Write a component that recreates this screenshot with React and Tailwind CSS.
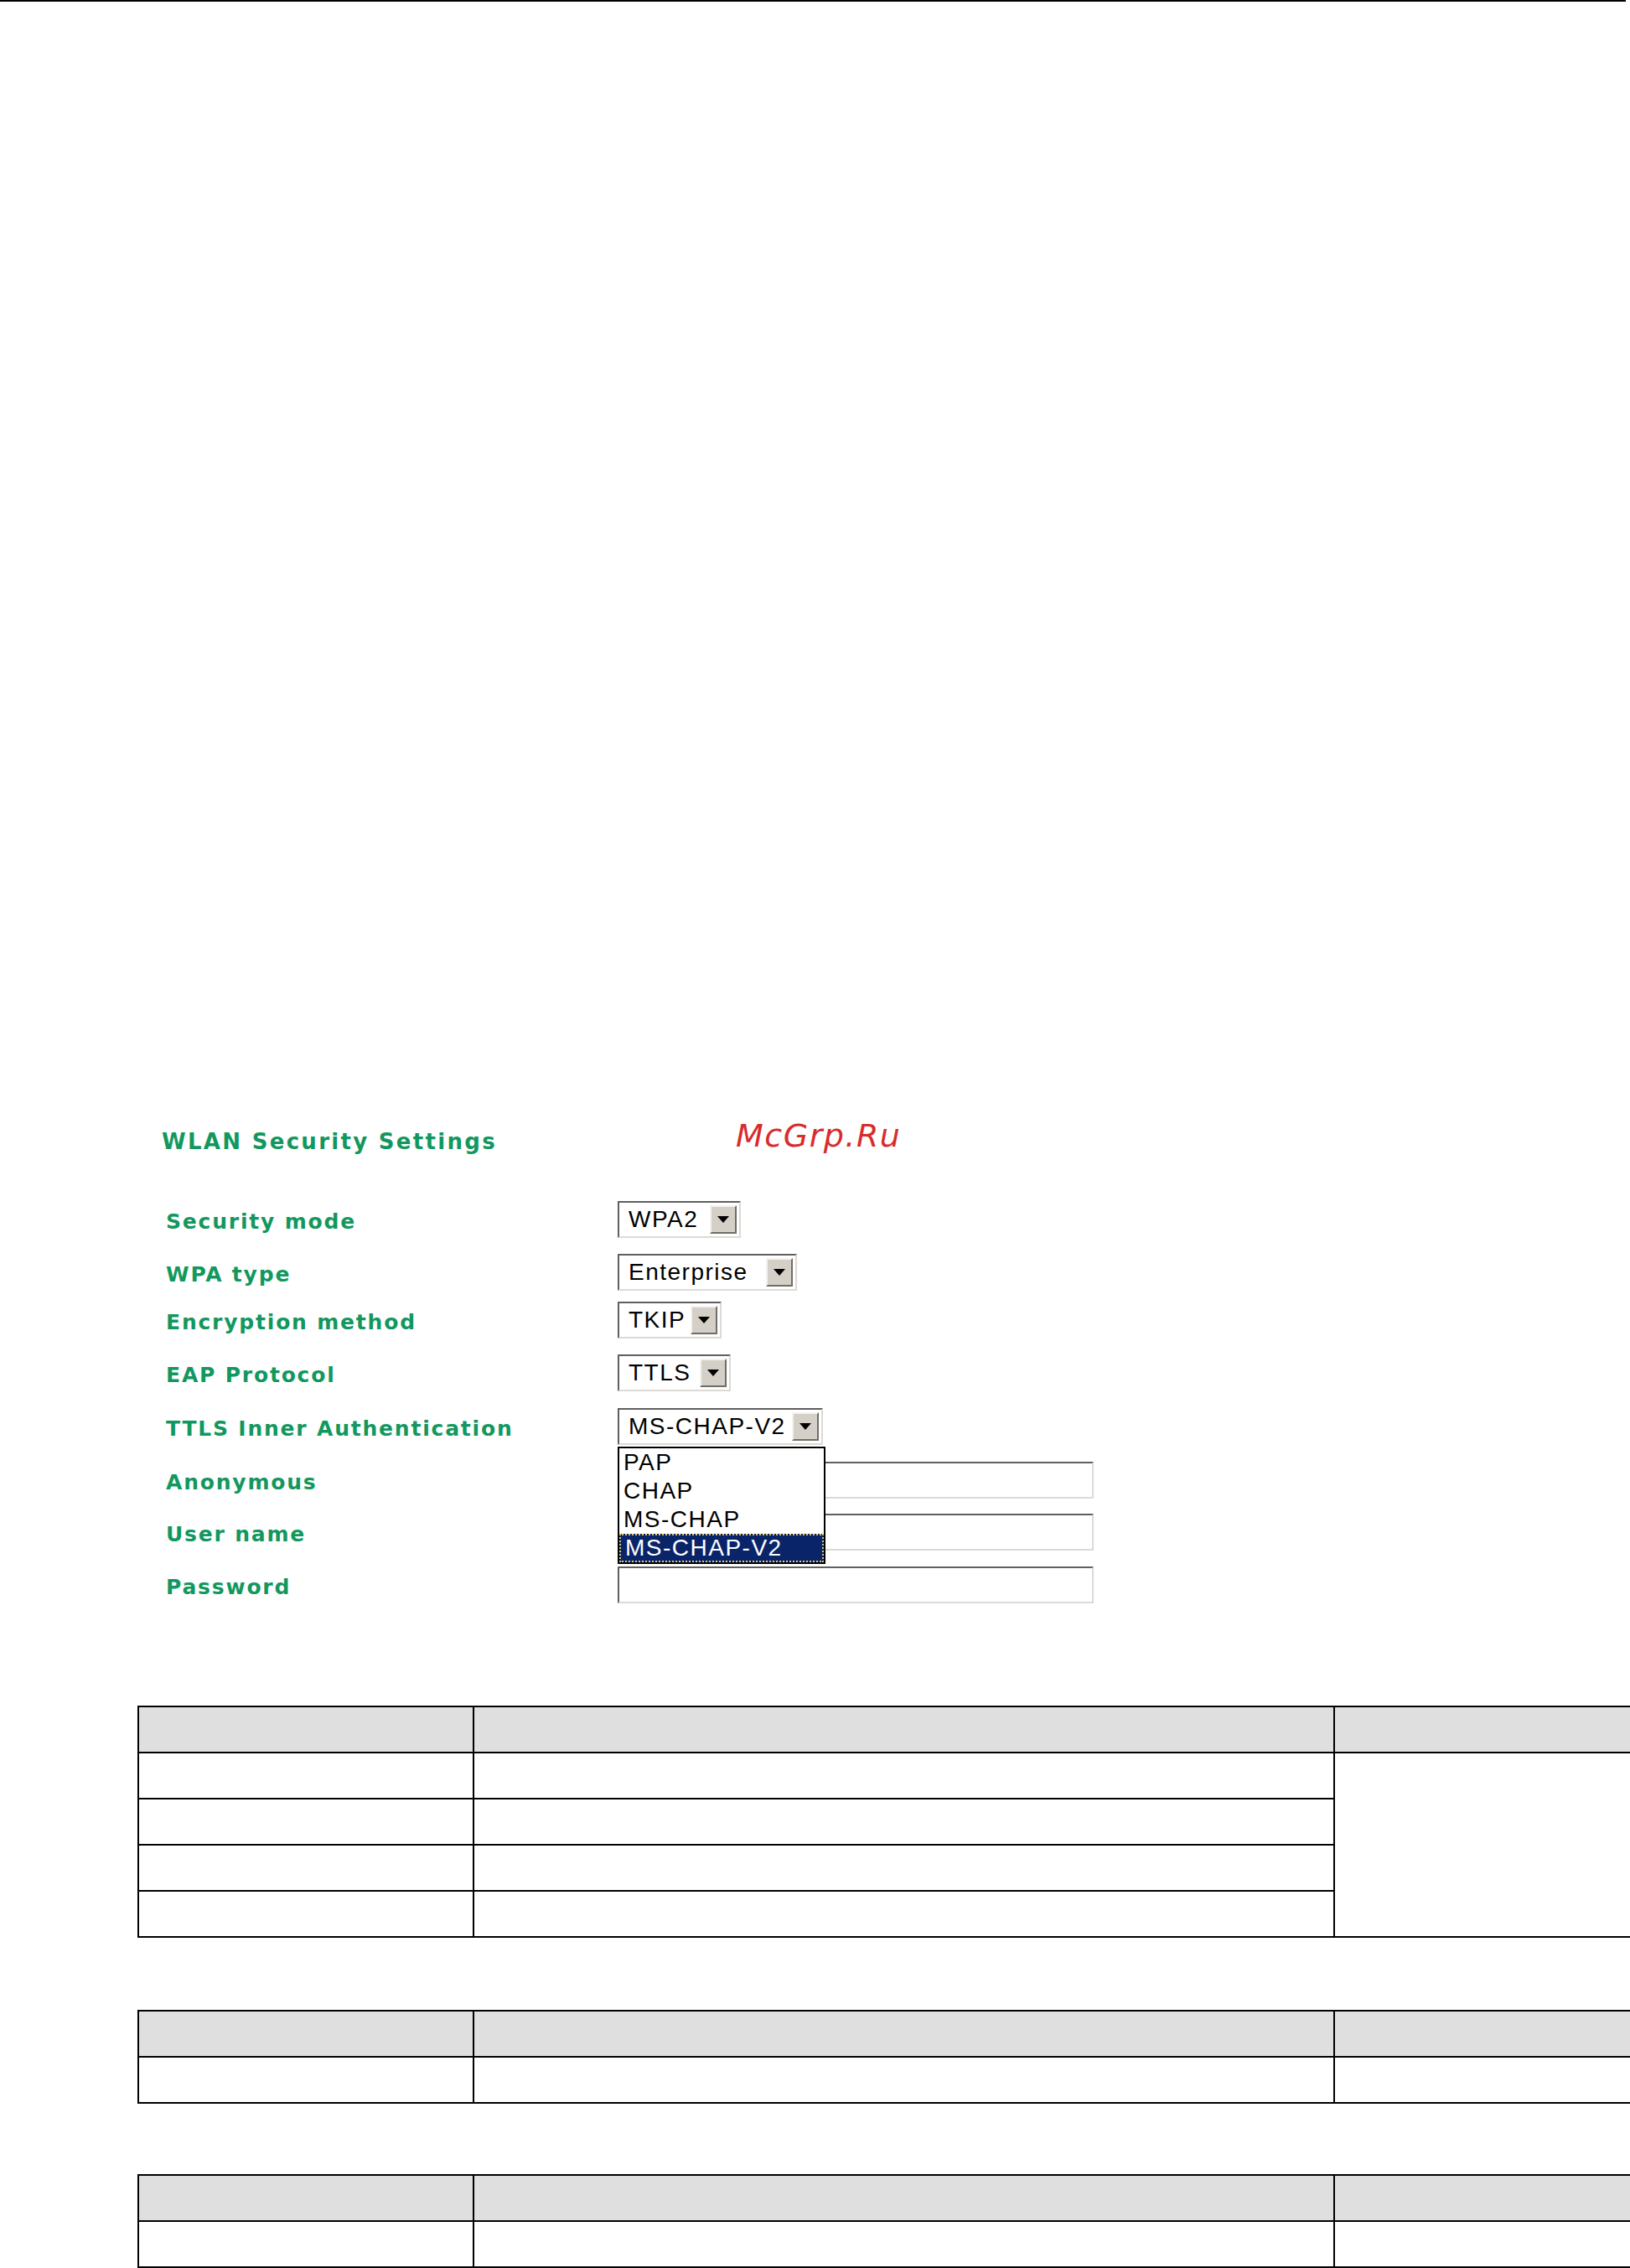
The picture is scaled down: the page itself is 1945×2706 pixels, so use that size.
import React from 'react';

// Classic Win9x-style widgets for the WLAN security form
const labelFont = { fontFamily: '"DejaVu Sans", Verdana, sans-serif' };
const controlFont = { fontFamily: '"Liberation Sans", Tahoma, Arial, sans-serif' };

function DropArrow() {
  return (
    <div className="flex items-center justify-center w-[32px] my-[3px] mr-[3px] bg-[#d4d0c8] border-2 border-t-[#f4f3ee] border-l-[#f4f3ee] border-b-[#6f6d68] border-r-[#6f6d68]">
      <svg width="14" height="8" viewBox="0 0 14 8">
        <path d="M0 0 H14 L7 8 Z" fill="#000" />
      </svg>
    </div>
  );
}

function Select({ value, widthClass }) {
  return (
    <div className={`flex h-[44px] bg-white border-2 border-t-[#5f5f5f] border-l-[#5f5f5f] border-b-[#dcdad4] border-r-[#dcdad4] ${widthClass}`}>
      <div
        className="flex-1 flex items-center pl-[11px] text-[28px] tracking-[1.5px] text-black leading-none"
        style={controlFont}
      >
        {value}
      </div>
      <DropArrow />
    </div>
  );
}

function TextField() {
  return (
    <div className="h-[44px] w-[568px] bg-white border-2 border-t-[#5f5f5f] border-l-[#5f5f5f] border-b-[#dcdad4] border-r-[#dcdad4]" />
  );
}

function FormRow({ label, children, className = '' }) {
  return (
    <div className={`flex items-center h-[44px] ${className}`}>
      <div
        className="w-[544px] pl-[5px] pt-[5px] text-[25px] font-bold tracking-[1.8px] text-[#12985e]"
        style={labelFont}
      >
        {label}
      </div>
      <div className="relative">{children}</div>
    </div>
  );
}

function InnerAuthList() {
  const options = ['PAP', 'CHAP', 'MS-CHAP', 'MS-CHAP-V2'];
  return (
    <div className="absolute left-0 top-[46px] z-10 w-[248px] bg-white border-2 border-black" style={controlFont}>
      {options.map((opt) => {
        const selected = opt === 'MS-CHAP-V2';
        return (
          <div
            key={opt}
            className={`h-[34px] flex items-center pl-[5px] text-[28px] tracking-[1.5px] leading-none ${
              selected ? 'bg-[#0a246a] text-white border-2 border-dotted border-[#d8c878]' : 'text-black'
            }`}
          >
            {opt}
          </div>
        );
      })}
    </div>
  );
}

function SpecTable({ rows, merged }) {
  return (
    <table className="border-collapse table-fixed w-[1781px]">
      <colgroup>
        <col className="w-[400px]" />
        <col className="w-[1027px]" />
        <col className="w-[354px]" />
      </colgroup>
      <thead>
        <tr className="h-[55px] bg-[#dfdfdf]">
          <th className="border-2 border-black" />
          <th className="border-2 border-black" />
          <th className="border-2 border-black" />
        </tr>
      </thead>
      <tbody>
        {Array.from({ length: rows }).map((_, i) => (
          <tr key={i} className="h-[55px]">
            <td className="border-2 border-black" />
            <td className="border-2 border-black" />
            {(!merged || i === 0) && (
              <td className="border-2 border-black" rowSpan={merged ? rows : 1} />
            )}
          </tr>
        ))}
      </tbody>
    </table>
  );
}

export default function App() {
  return (
    <div className="w-[1945px] h-[2706px] bg-white overflow-hidden">
      <div className="h-[2px] w-[1940px] bg-black" />

      <section className="mt-[1338px] pl-[193px]">
        <div className="flex items-center h-[44px]">
          <h2
            className="w-[685px] text-[26px] font-bold tracking-[2.3px] text-[#12985e]"
            style={labelFont}
          >
            WLAN Security Settings
          </h2>
          <span
            className="text-[38px] italic tracking-[1.5px] text-[#d92b2b] -mt-[14px]"
            style={labelFont}
          >
            McGrp.Ru
          </span>
        </div>

        <div className="mt-[49px] flex flex-col">
          <FormRow label="Security mode">
            <Select value="WPA2" widthClass="w-[147px]" />
          </FormRow>
          <FormRow label="WPA type" className="mt-[19px]">
            <Select value="Enterprise" widthClass="w-[214px]" />
          </FormRow>
          <FormRow label="Encryption method" className="mt-[13px]">
            <Select value="TKIP" widthClass="w-[124px]" />
          </FormRow>
          <FormRow label="EAP Protocol" className="mt-[19px]">
            <Select value="TTLS" widthClass="w-[135px]" />
          </FormRow>
          <FormRow label="TTLS Inner Authentication" className="mt-[20px]">
            <Select value="MS-CHAP-V2" widthClass="w-[245px]" />
            <InnerAuthList />
          </FormRow>
          <FormRow label="Anonymous" className="mt-[20px]">
            <TextField />
          </FormRow>
          <FormRow label="User name" className="mt-[18px]">
            <TextField />
          </FormRow>
          <FormRow label="Password" className="mt-[19px]">
            <TextField />
          </FormRow>
        </div>
      </section>

      <div className="pl-[164px]">
        <div className="mt-[122px]">
          <SpecTable rows={4} merged />
        </div>
        <div className="mt-[86px]">
          <SpecTable rows={1} />
        </div>
        <div className="mt-[84px]">
          <SpecTable rows={1} />
        </div>
      </div>
    </div>
  );
}
